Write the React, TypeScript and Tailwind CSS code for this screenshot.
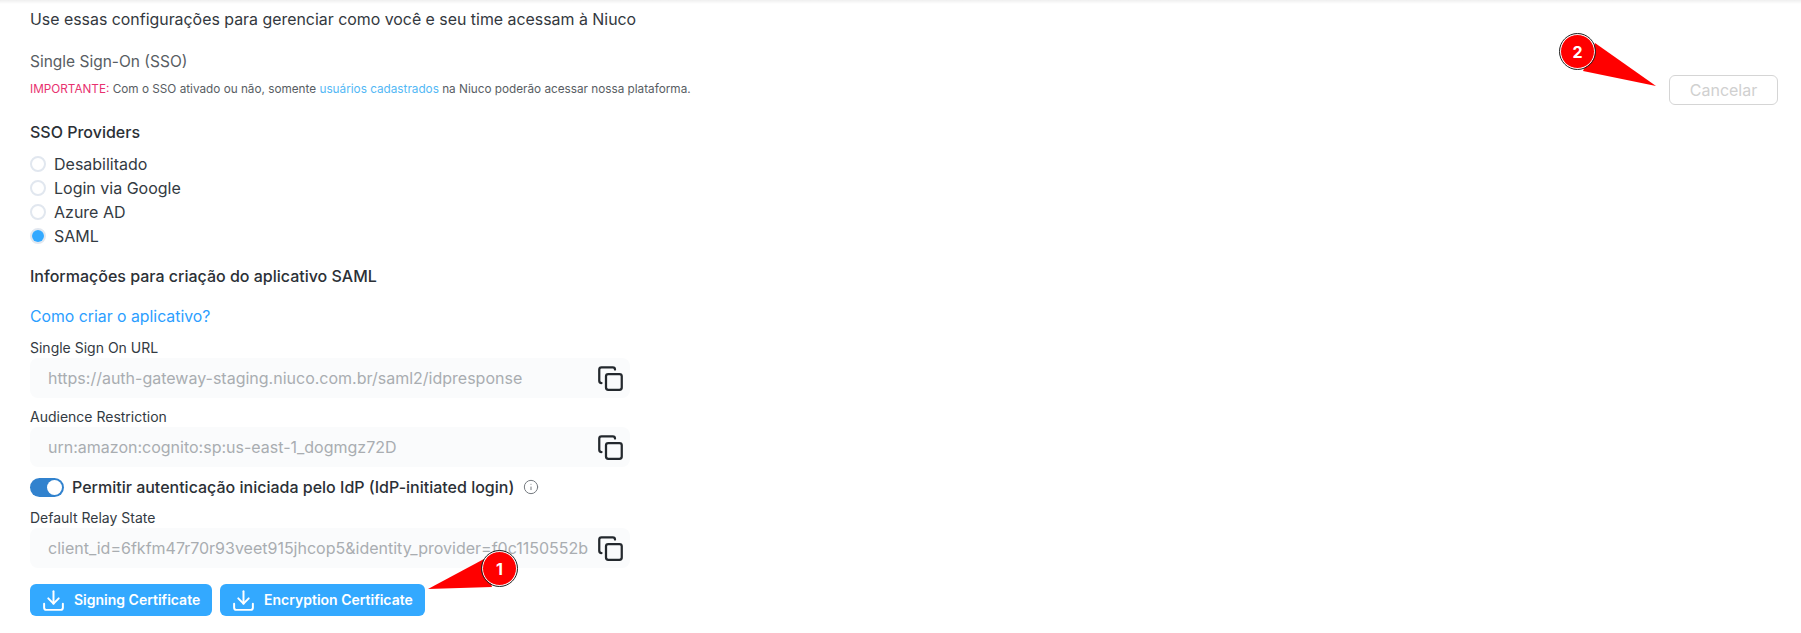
import { Copy, Download, Info } from 'lucide-react';

const providers = ['Desabilitado', 'Login via Google', 'Azure AD', 'SAML'];

function Radio({ label, checked }: { label: string; checked?: boolean }) {
	return (
		<label className="flex h-6 items-center gap-2 text-base text-[#333a42]">
			<span className="flex size-4 items-center justify-center rounded-full border-2 border-[#e1e7ef] bg-white">
				{checked && <span className="size-3 shrink-0 rounded-full bg-[#33a9ff]" />}
			</span>
			{label}
		</label>
	);
}

function CopyField({ label, value }: { label: string; value: string }) {
	return (
		<div>
			<div className="h-[19px] text-sm leading-[19px] text-[#333a42]">{label}</div>
			<div className="mt-px flex h-10 w-[600px] items-center rounded-lg bg-[#fafbfc] pl-[18px] pr-[6px]">
				<div className="flex-1 overflow-hidden whitespace-nowrap text-base text-[#a9adb1]">{value}</div>
				<Copy className="ml-[9px] size-[27px] shrink-0 text-[#23282d]" strokeWidth={2} />
			</div>
		</div>
	);
}

function CertButton({ label, width }: { label: string; width: string }) {
	return (
		<button className={`flex h-8 items-center gap-2 rounded-md bg-[#33a9ff] pl-[11px] text-sm font-semibold text-white ${width}`}>
			<Download className="size-[25px]" strokeWidth={1.9} />
			{label}
		</button>
	);
}

function Badge({ n, className }: { n: number; className: string }) {
	return (
		<div
			className={`absolute flex size-[35px] items-center justify-center rounded-full border border-white bg-[#ff0000] text-base font-bold text-white outline-1 outline-[#222] ${className}`}
		>
			{n}
		</div>
	);
}

export default function App() {
	return (
		<div className="relative h-[633px] w-[1801px] overflow-hidden bg-white font-['Inter',sans-serif]">
			<div className="h-1 bg-gradient-to-b from-[#efefef] to-white" />

			<div className="flex justify-between pl-[30px] pr-[23px]">
				<div>
					<p className="mt-[5px] h-[21px] text-[15.9px] leading-[21px] text-[#33383e]">
						Use essas configurações para gerenciar como você e seu time acessam à Niuco
					</p>
					<h2 className="mt-[21px] h-[21px] text-[15.5px] leading-[21px] text-[#585d63]">Single Sign-On (SSO)</h2>
					<p className="mt-[10px] h-[15px] text-[11.75px] leading-[15px] text-[#585d63]">
						<span className="text-[#e8316f]">IMPORTANTE:</span> Com o SSO ativado ou não, somente{' '}
						<span className="text-[#53b8f5]">usuários cadastrados</span> na Niuco poderão acessar nossa plataforma.
					</p>
				</div>
				<button className="mt-[71px] h-[30px] w-[109px] self-start rounded-md border border-[#d5d5d5] text-base text-[#d0d0d0]">
					Cancelar
				</button>
			</div>

			<div className="pl-[30px]">
				<h3 className="mt-[17px] h-[21px] text-base font-medium leading-[21px] text-[#2b3036]">SSO Providers</h3>
				<div className="mt-[9px] flex flex-col">
					{providers.map(p => (
						<Radio key={p} label={p} checked={p === 'SAML'} />
					))}
				</div>

				<h3 className="mt-[18px] h-[21px] text-base font-medium leading-[21px] text-[#2b3036]">
					Informações para criação do aplicativo SAML
				</h3>
				<a className="mt-[19px] block h-[21px] text-[15.8px] leading-[21px] text-[#2b9eff]">Como criar o aplicativo?</a>

				<div className="mt-[11px] flex flex-col gap-[9px]">
					<CopyField label="Single Sign On URL" value="https://auth-gateway-staging.niuco.com.br/saml2/idpresponse" />
					<CopyField label="Audience Restriction" value="urn:amazon:cognito:sp:us-east-1_dogmgz72D" />
				</div>

				<div className="mt-2 flex h-6 items-center">
					<span className="flex h-[19px] w-[34px] items-center justify-end rounded-full bg-[#3182ce] pr-[2px]">
						<span className="size-[15px] rounded-full bg-white" />
					</span>
					<span className="ml-2 text-base font-medium text-[#2b3036]">
						Permitir autenticação iniciada pelo IdP (IdP-initiated login)
					</span>
					<Info className="ml-[9px] size-4 text-[#757a80]" strokeWidth={1.5} />
				</div>

				<div className="mt-[9px]">
					<CopyField
						label="Default Relay State"
						value="client_id=6fkfm47r70r93veet915jhcop5&identity_provider=f0c1150552b8d4e7a3"
					/>
				</div>

				<div className="mt-4 flex gap-2">
					<CertButton label="Signing Certificate" width="w-[182px]" />
					<CertButton label="Encryption Certificate" width="w-[205px]" />
				</div>
			</div>

			{/* setas de anotacao por cima do print */}
			<svg className="absolute inset-0" width="1801" height="633" viewBox="0 0 1801 633">
				<polygon points="428,589 484,559 492,587" fill="#ff0000" />
				<polygon points="1656,86 1595,43 1583,71" fill="#ff0000" />
			</svg>
			<Badge n={1} className="left-[482px] top-[551px]" />
			<Badge n={2} className="left-[1560px] top-[34px]" />
		</div>
	);
}
